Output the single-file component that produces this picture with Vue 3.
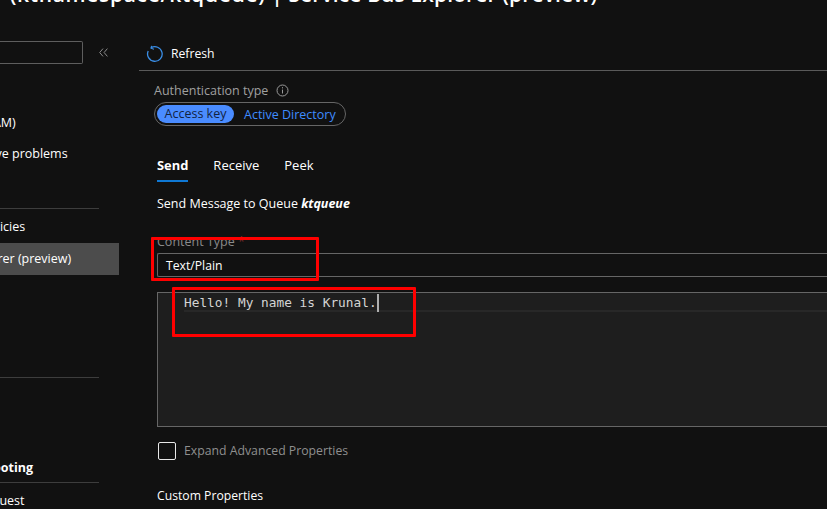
<template>
  <div class="page">
    <header class="blade-head">
      <h1 class="blade-title"><span class="title-name">ktqueue</span> <span class="title-path">(ktnamespace/ktqueue)</span> | Service Bus Explorer (preview)</h1>
      <div class="blade-sub">Service Bus Queue</div>
    </header>

    <div class="blade-body">
      <aside class="sidebar">
        <div class="search-row">
          <div class="search-box"></div>
          <svg class="collapse" width="9" height="9" viewBox="0 0 9 9" fill="none">
            <path d="M4 .6 .7 4.5 4 8.4M8.4 .6 5.1 4.5 8.4 8.4" stroke="#8a8a8a" stroke-width="1" />
          </svg>
        </div>
        <nav class="menu">
          <div class="menu-item first">Access control (IAM)</div>
          <div class="menu-item second">Diagnose and solve problems</div>
          <div class="menu-line line-a"></div>
          <div class="menu-item">Shared access policies</div>
          <div class="menu-item active">Service Bus Explorer (preview)</div>
          <div class="menu-line line-b"></div>
          <div class="menu-head">Support + troubleshooting</div>
          <div class="menu-line"></div>
          <div class="menu-item last">New support request</div>
        </nav>
      </aside>

      <main class="content">
        <div class="toolbar">
          <svg class="refresh-icon" width="18" height="18" viewBox="0 0 18 18" fill="none">
            <path d="M5 2.8A7.3 7.3 0 1 1 2.2 6" stroke="#3a8ee6" stroke-width="1.3" />
            <path d="M5.6 .8 5 3.2 8 4.2" stroke="#3a8ee6" stroke-width="1.1" />
          </svg>
          <span>Refresh</span>
        </div>

        <div class="form">
          <div class="auth-label">
            <span>Authentication type</span>
            <svg width="13" height="13" viewBox="0 0 13 13" fill="none">
              <circle cx="6.5" cy="6.5" r="5.5" stroke="#9a9a9a" />
              <path d="M6.5 5.6v3.9M6.5 3.2v1.2" stroke="#9a9a9a" />
            </svg>
          </div>
          <div class="toggle">
            <span class="toggle-on">Access key</span>
            <span class="toggle-off">Active Directory</span>
          </div>

          <div class="tabs">
            <span v-for="t in tabs" :key="t" class="tab" :class="{ selected: t === 'Send' }">{{ t }}</span>
          </div>

          <p class="send-title">Send Message to Queue <b>ktqueue</b></p>

          <label class="field-label">Content Type <em>*</em></label>
          <div class="text-input">Text/Plain</div>

          <div class="editor">
            <div class="editor-line">Hello! My name is Krunal.<i class="caret"></i></div>
          </div>

          <div class="check-row">
            <span class="check-box"></span>
            <span>Expand Advanced Properties</span>
          </div>

          <div class="custom-props">Custom Properties</div>
        </div>
      </main>
    </div>

    <div class="mark mark-type"></div>
    <div class="mark mark-body"></div>
  </div>
</template>

<script setup>
const tabs = ['Send', 'Receive', 'Peek']
</script>

<style>
html,
body {
  margin: 0;
  background: #111111;
}
</style>

<style scoped>
.page {
  position: relative;
  width: 827px;
  height: 509px;
  overflow: hidden;
  background: #111111;
  color: #ffffff;
  font-family: "Open Sans", "Noto Sans", sans-serif;
  font-size: 12.5px;
}

/* the page is scrolled in the screenshot, so everything bleeds off top and left */
.blade-head {
  display: flow-root;
  height: 31px;
  white-space: nowrap;
  margin-left: -104px;
}

.blade-title {
  margin: -19px 0 0 18px;
  height: 27px;
  font-size: 21px;
  line-height: 27px;
  font-weight: 600;
  letter-spacing: 0.12px;
}

.title-name {
  margin-right: 5px;
}

.title-path {
  letter-spacing: 0.67px;
}

.blade-sub {
  margin-top: 3px;
  font-size: 11px;
  line-height: 16px;
  color: #a0a0a0;
}

.blade-body {
  display: flex;
}

.sidebar {
  width: 139px;
  flex-shrink: 0;
  overflow: hidden;
  white-space: nowrap;
}

.search-row {
  display: flex;
  align-items: center;
  height: 23px;
  margin-top: 10px;
}

.search-box {
  width: 83px;
  height: 23px;
  box-sizing: border-box;
  border: 1px solid #5e5e5e;
  border-left: 0;
  border-radius: 0 2px 2px 0;
}

.collapse {
  margin-left: 16px;
}

.menu {
  width: 223px;
  margin-left: -104px;
}

.menu-item {
  height: 32px;
  line-height: 32px;
}

.menu-item.first {
  margin-top: 43px;
  padding-left: 3px;
}

.menu-item.second {
  height: 31px;
  line-height: 30px;
}

.menu-item.last {
  margin-top: 2px;
  padding-left: 5px;
}

.menu-item.active {
  background: #4c4c4c;
}

.menu-line {
  height: 1px;
  margin-right: 20px;
  background: #3d3d3d;
}

.line-a {
  margin-top: 38px;
  margin-bottom: 2px;
}

.line-b {
  margin-top: 102px;
}

.menu-head {
  margin: 81px 0 0 -27px;
  height: 23px;
  line-height: 18px;
  font-weight: 700;
}

.content {
  flex: 1;
  min-width: 0;
}

.toolbar {
  display: flex;
  align-items: center;
  gap: 7px;
  height: 33px;
  padding: 6px 0 0 7px;
  font-size: 12.2px;
  border-bottom: 1px solid #5a5a5a;
}

.form {
  padding-left: 18px;
}

.auth-label {
  display: flex;
  align-items: center;
  gap: 8px;
  margin: 10px 0 0 -3px;
  height: 18px;
  color: #a0a0a0;
}

.toggle {
  display: flex;
  align-items: center;
  width: 192px;
  height: 24px;
  box-sizing: border-box;
  margin: 3px 0 0 -3px;
  padding: 0 2px;
  border: 1px solid #666666;
  border-radius: 12px;
}

.toggle-on {
  width: 77px;
  height: 18px;
  line-height: 18px;
  text-align: center;
  border-radius: 9px;
  background: #4a8cff;
  color: #12233f;
}

.toggle-off {
  margin-left: 10px;
  color: #3f8cff;
}

.tabs {
  display: flex;
  gap: 25px;
  margin-top: 28px;
  font-size: 13px;
}

.tab {
  height: 28px;
  line-height: 22px;
  box-sizing: border-box;
}

.tab.selected {
  font-size: 12.9px;
  font-weight: 700;
  border-bottom: 2px solid #0f78d4;
}

.send-title {
  margin: 13px 0 0;
  line-height: 18px;
}

.send-title b {
  font-style: italic;
}

.field-label {
  display: block;
  margin-top: 20px;
  height: 20px;
  line-height: 18px;
  color: #8a8a8a;
}

.field-label em {
  font-style: normal;
  color: #7a2a2a;
}

.text-input {
  height: 24px;
  line-height: 23px;
  box-sizing: border-box;
  padding-left: 8px;
  font-size: 12.2px;
  border: 1px solid #666666;
  border-right: 0;
  border-radius: 2px 0 0 2px;
}

.editor {
  height: 135px;
  box-sizing: border-box;
  margin-top: 15px;
  padding: 1px 0 0 26px;
  background: #1e1e1e;
  border: 1px solid #666666;
  border-width: 1px 0 1px 1px;
}

.editor-line {
  height: 18px;
  box-sizing: border-box;
  line-height: 17px;
  border-bottom: 2px solid #282828;
  font-family: "DejaVu Sans Mono", monospace;
  font-size: 12.8px;
  color: #d4d4d4;
  white-space: pre;
}

.caret {
  display: inline-block;
  width: 2px;
  height: 18px;
  vertical-align: top;
  background: #aeaeae;
}

.check-row {
  display: flex;
  align-items: center;
  gap: 8px;
  margin-top: 15px;
  height: 18px;
  font-size: 12.25px;
  line-height: 16px;
  color: #8f8f8f;
}

.check-box {
  width: 18px;
  height: 18px;
  box-sizing: border-box;
  margin-left: 1px;
  border: 1px solid #e8e8e8;
  border-radius: 2px;
}

.custom-props {
  margin-top: 27px;
  line-height: 18px;
  font-size: 12.2px;
}

.mark {
  position: absolute;
  box-sizing: border-box;
  border: 3px solid #ff0000;
  border-radius: 1px;
}

.mark-type {
  left: 151px;
  top: 237px;
  width: 168px;
  height: 44px;
}

.mark-body {
  left: 172px;
  top: 287px;
  width: 244px;
  height: 50px;
}
</style>
